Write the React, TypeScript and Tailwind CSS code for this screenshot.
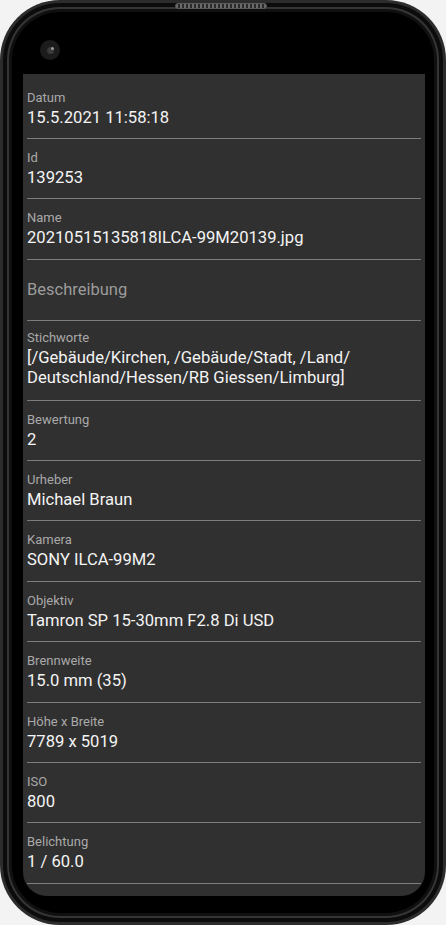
const rows: { label?: string; value: string[]; first?: boolean }[] = [
  { label: 'Datum', value: ['15.5.2021 11:58:18'], first: true },
  { label: 'Id', value: ['139253'] },
  { label: 'Name', value: ['20210515135818ILCA-99M20139.jpg'] },
  { value: ['Beschreibung'] },
  {
    label: 'Stichworte',
    value: ['[/Gebäude/Kirchen, /Gebäude/Stadt, /Land/', 'Deutschland/Hessen/RB Giessen/Limburg]'],
  },
  { label: 'Bewertung', value: ['2'] },
  { label: 'Urheber', value: ['Michael Braun'] },
  { label: 'Kamera', value: ['SONY ILCA-99M2'] },
  { label: 'Objektiv', value: ['Tamron SP 15-30mm F2.8 Di USD'] },
  { label: 'Brennweite', value: ['15.0 mm (35)'] },
  { label: 'Höhe x Breite', value: ['7789 x 5019'] },
  { label: 'ISO', value: ['800'] },
  { label: 'Belichtung', value: ['1 / 60.0'] },
]

function Field({ label, value, first }: { label?: string; value: string[]; first?: boolean }) {
  if (!label) {
    // empty description, shown as hint
    return (
      <div className="flex h-[61px] items-center border-b border-[#7d7d7d] pt-[1px] text-[16.5px] text-[#9c9c9c]">
        {value[0]}
      </div>
    )
  }
  const multi = value.length > 1
  return (
    <div
      className={`border-b border-[#7d7d7d] ${first ? 'pt-[15.5px]' : multi ? 'pt-[9px]' : 'pt-[11px]'} ${multi ? 'pb-[12px]' : 'pb-[10.4px]'}`}
    >
      <div className="text-[13px] leading-4 text-[#a9a9a9]">{label}</div>
      <div className="mt-[2px] text-[16.6px] leading-5 text-[#f4f4f4]">
        {value.map((line) => (
          <div key={line}>{line}</div>
        ))}
      </div>
    </div>
  )
}

export default function App() {
  return (
    <div className="h-[925px] w-[446px] bg-[#f3f3f3] font-['Roboto',sans-serif]">
      <div className="relative h-full rounded-[60px] bg-[#2c2c2c] p-[3px]">
        {/* speaker grill */}
        <div className="absolute left-[175px] top-[3px] h-[6px] w-[92px] rounded-full border border-[#5a5a5a] bg-[repeating-linear-gradient(90deg,#6a6a6a_0_2px,#2a2a2a_2px_4px)]" />
        <div className="h-full rounded-[57px] bg-[#0c0c0c] p-[4px]">
          <div className="h-full rounded-[53px] bg-[#353535] p-[2px]">
            <div className="h-full rounded-[51px] bg-[#101010] p-[3px]">
              <div className="flex h-full flex-col rounded-[48px] bg-black pb-[17px] pl-[11px] pr-[9px]">
                <div className="h-[62px] shrink-0 pl-[17px] pt-[28px]">
                  <div className="flex h-5 w-5 items-center justify-center rounded-full bg-[#1c1c1c]">
                    <div className="flex h-[7px] w-[7px] items-start justify-end rounded-full bg-[#3a3a3a]">
                      <div className="h-[3px] w-[3px] rounded-full bg-[#9a9a9a]" />
                    </div>
                  </div>
                </div>
                <div className="flex-1 overflow-hidden rounded-b-[24px] bg-[#303030] px-[4px]">
                  {rows.map((r, i) => (
                    <Field key={i} label={r.label} value={r.value} first={r.first} />
                  ))}
                </div>
              </div>
            </div>
          </div>
        </div>
      </div>
    </div>
  )
}
